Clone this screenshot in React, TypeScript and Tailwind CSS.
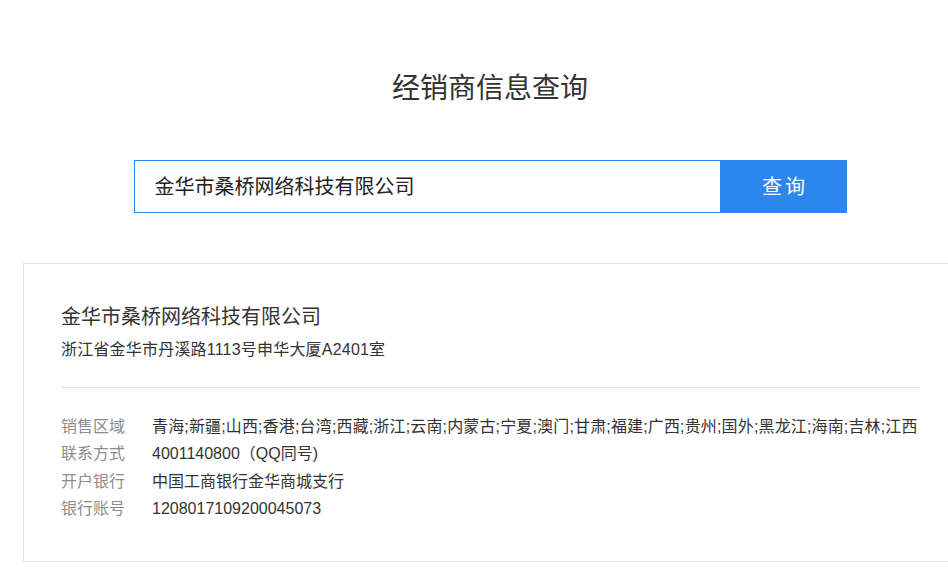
const regions =
  '青海;新疆;山西;香港;台湾;西藏;浙江;云南;内蒙古;宁夏;澳门;甘肃;福建;广西;贵州;国外;黑龙江;海南;吉林;江西';

const rows = [
  { label: '销售区域', value: regions, wide: true },
  { label: '联系方式', value: '4001140800（QQ同号)' },
  { label: '开户银行', value: '中国工商银行金华商城支行' },
  { label: '银行账号', value: '1208017109200045073' },
];

export default function App() {
  return (
    <div
      className="w-full min-h-screen overflow-hidden bg-white text-[#333]"
      style={{ fontFamily: '"Liberation Sans", "Noto Sans CJK SC", sans-serif' }}
    >
      <div className="w-[980px]">
        {/* Title */}
        <h1 className="pt-[69px] text-center text-[28px] leading-[40px] font-normal text-[#333]">
          经销商信息查询
        </h1>

        {/* Search bar */}
        <div className="mt-[51px] flex justify-center">
          <div className="flex h-[53px]">
            <div className="w-[587px] border border-[#2d86ec] flex items-center pl-[20px] text-[20px] text-[#222]">
              金华市桑桥网络科技有限公司
            </div>
            <button className="w-[126px] bg-[#2d86ec] text-white text-[20px] tracking-[3px] pl-[3px] flex items-center justify-center">
              查询
            </button>
          </div>
        </div>

        {/* Result card */}
        <div className="mt-[50px] mx-[23px] border border-[#dde2e6] px-[37px] pt-[39px] pb-[39px]">
          <div className="text-[20px] leading-[28px] text-[#333]">金华市桑桥网络科技有限公司</div>
          <div className="mt-[7px] text-[16px] leading-[24px] text-[#333] tracking-[0.2px]">
            浙江省金华市丹溪路1113号申华大厦A2401室
          </div>
          <div className="mt-[25px] h-px bg-[#e2e2e2]" />
          <div className="mt-[25px] flex flex-col">
            {rows.map((r) => (
              <div key={r.label} className="flex text-[16px] leading-[27.3px] whitespace-nowrap">
                <span className="w-[91px] shrink-0 text-[#8c8c8c]">{r.label}</span>
                <span className={r.wide ? 'text-[#333] tracking-[0.15px]' : 'text-[#333]'}>{r.value}</span>
              </div>
            ))}
          </div>
        </div>
      </div>
    </div>
  );
}
